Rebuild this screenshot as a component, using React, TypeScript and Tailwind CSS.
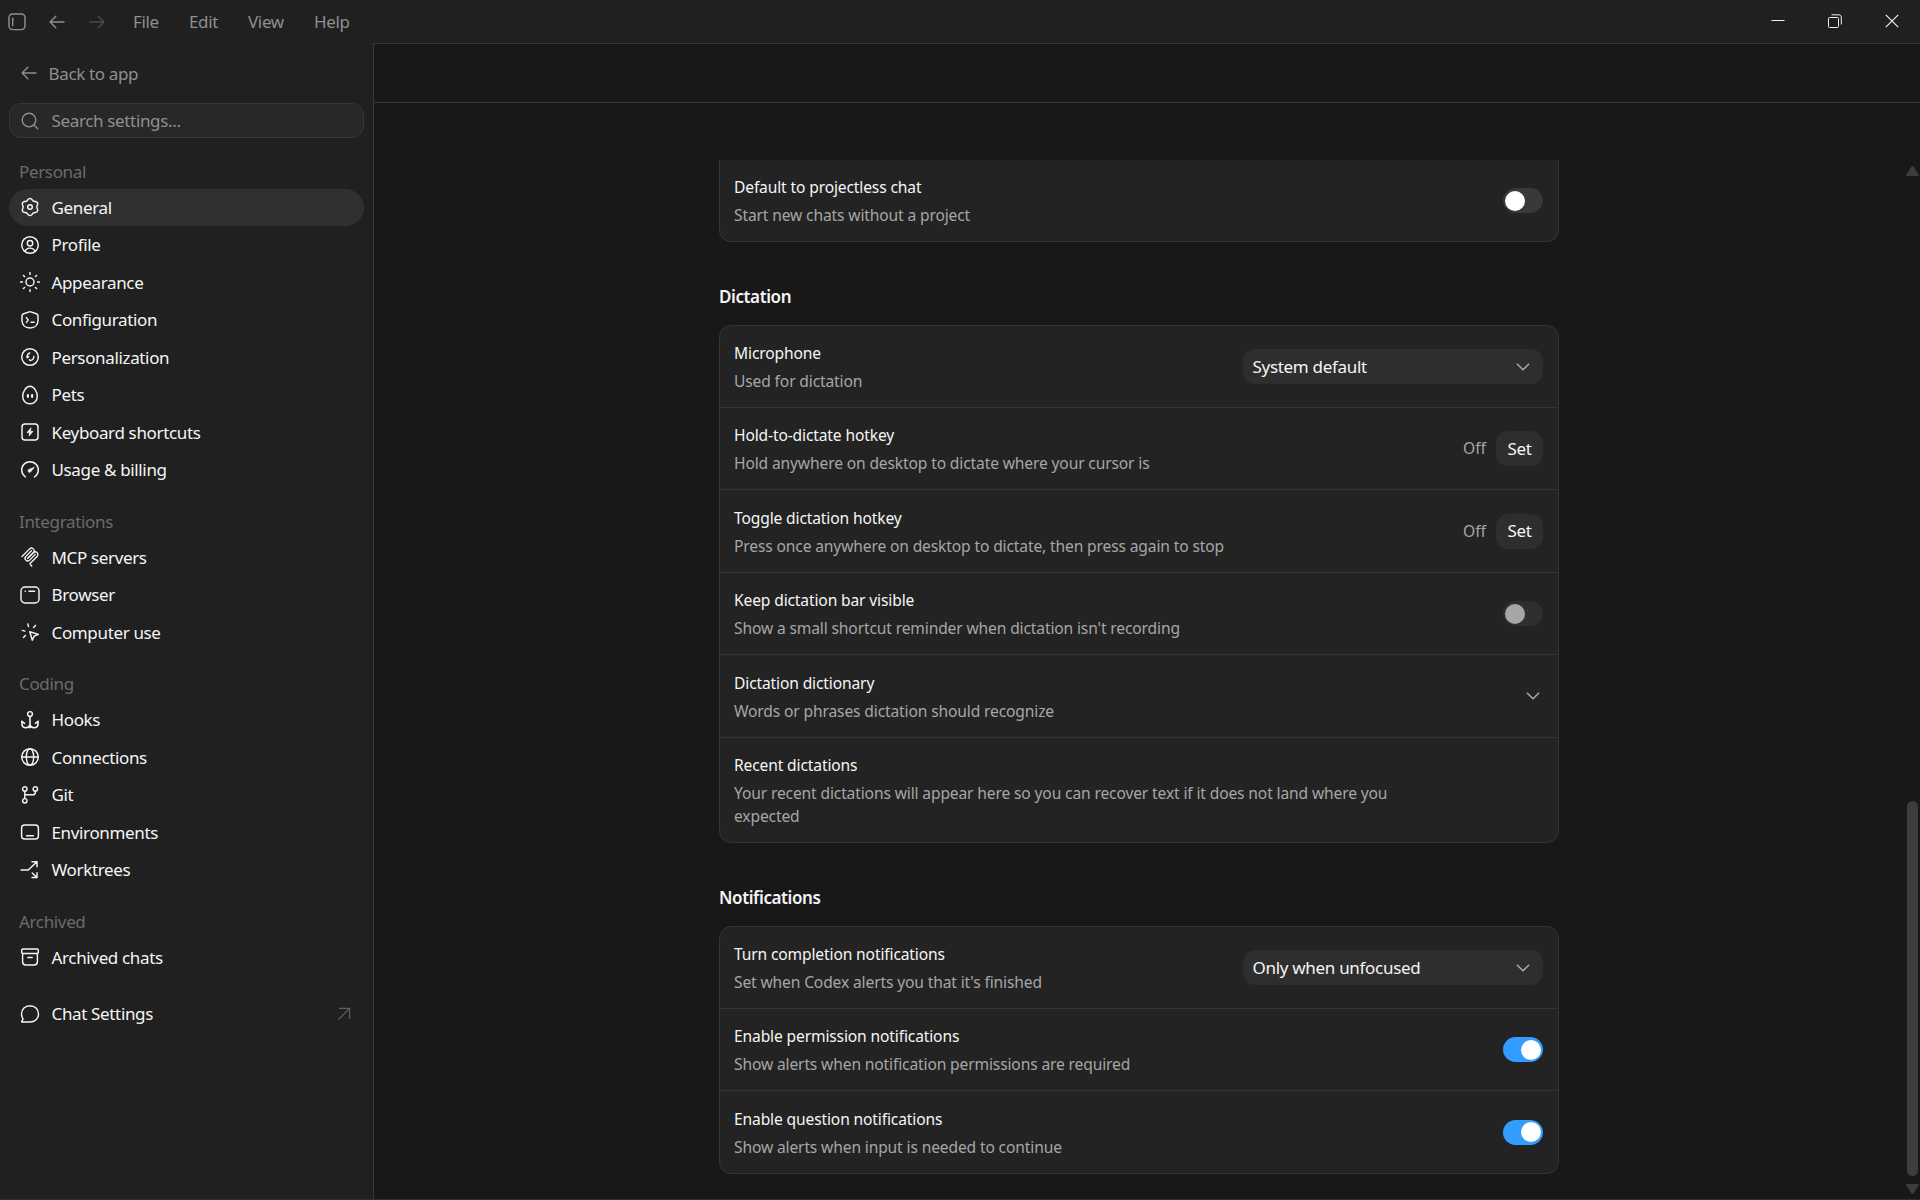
import type { ReactNode } from "react";

const Icon = ({
  children,
  className = "size-5",
}: {
  children: ReactNode;
  className?: string;
}) => (
  <svg
    viewBox="0 0 20 20"
    fill="none"
    stroke="currentColor"
    strokeWidth="1.45"
    strokeLinecap="round"
    strokeLinejoin="round"
    className={`${className} shrink-0`}
  >
    {children}
  </svg>
);

// six-lobed outline of the settings cog
const cogOutline = Array.from({ length: 72 }, (_, i) => {
  const a = (i * Math.PI) / 36;
  const r = 7.7 - 0.85 * Math.cos(6 * a);
  return `${(10 + r * Math.cos(a)).toFixed(2)},${(10 + r * Math.sin(a)).toFixed(2)}`;
}).join(" ");

const ArrowLeft = () => (
  <Icon>
    <path d="M17 10H3.2M8.8 4.3 3.1 10l5.7 5.7" strokeWidth="1.35" />
  </Icon>
);

const Chevron = () => (
  <Icon className="size-4">
    <path d="m3 6.5 7 7 7-7" strokeWidth="2" />
  </Icon>
);

const icons = {
  general: (
    <Icon>
      <polygon points={cogOutline} />
      <circle cx="10" cy="10" r="2.3" />
    </Icon>
  ),
  profile: (
    <Icon>
      <circle cx="10" cy="10" r="8.3" />
      <circle cx="10" cy="8.2" r="2.7" />
      <path d="M5 16.2c.8-2 2.7-3.1 5-3.1s4.2 1.1 5 3.1" />
    </Icon>
  ),
  appearance: (
    <Icon>
      <circle cx="10" cy="10" r="4" />
      <path d="M10 .6v1.8M10 17.6v1.8M.6 10h1.8M17.6 10h1.8M3.4 3.4l1.2 1.2M15.4 15.4l1.2 1.2M3.4 16.6l1.2-1.2M15.4 4.6l1.2-1.2" />
    </Icon>
  ),
  configuration: (
    <Icon>
      <path d="M9.2 1.9 3.7 3.8C2.6 4.2 2 4.9 2 6v4.600c0 4.600 3.400 7.400 8 7.400s8-2.800 8-7.400V6c0-1.100-.6-1.800-1.700-2.200l-5.500-1.900a2.500 2.500 0 0 0-1.600 0Z" />
      <path d="M6.4 7.6 8.2 10l-1.800 2.400M11 12.3h3.200" />
    </Icon>
  ),
  personalization: (
    <Icon>
      <circle cx="10" cy="10" r="8.3" />
      <path d="M9.7 5.900c-1.900 1.100-2.900 2.800-2.600 4.800M13.8 9.400c.1 2-1.100 3.700-3.400 4.200M7.1 10.700l1.600-.9M10.4 13.600l-1-.9" />
    </Icon>
  ),
  pets: (
    <Icon>
      <path d="M10 1.2c-4 0-7.300 5.600-7.300 10 0 4.500 3.100 7.500 7.300 7.500s7.300-3 7.300-7.500c0-4.400-3.300-10-7.300-10Z" />
      <path d="M7.9 10.2v1.600M12.1 10.2v1.600" strokeWidth="2.2" />
    </Icon>
  ),
  keyboard: (
    <Icon>
      <rect x="2" y="2" width="16" height="16" rx="3" />
      <path
        d="m10.8 6.2-3.7 4.400h2.500l-.5 3.300 3.800-4.500h-2.500l.4-3.200Z"
        fill="currentColor"
        strokeWidth=".8"
      />
    </Icon>
  ),
  usage: (
    <Icon>
      <path d="M5.5 17A8.300 8.300 0 1 1 14.500 17" />
      <path
        d="M13.9 7.600 9.400 9.300a1.500 1.500 0 1 0 1.500 2.200l3-3.900Z"
        fill="currentColor"
        strokeWidth=".8"
      />
    </Icon>
  ),
  mcp: (
    <svg
      viewBox="0 0 180 180"
      fill="none"
      stroke="currentColor"
      strokeWidth="12"
      strokeLinecap="round"
      className="size-5 shrink-0"
    >
      <path d="M18 84.853 85.882 16.970c9.373-9.372 24.569-9.372 33.941 0 9.373 9.373 9.373 24.569 0 33.942L68.558 102.177" />
      <path d="m69.265 101.470 50.558-50.558c9.373-9.373 24.569-9.373 33.942 0l.353.353c9.373 9.373 9.373 24.569 0 33.941L92.725 146.600c-3.124 3.124-3.124 8.189 0 11.313l12.606 12.607" />
      <path d="M102.853 33.941 52.648 84.146c-9.372 9.372-9.372 24.568 0 33.941 9.373 9.372 24.569 9.372 33.941 0l50.205-50.205" />
    </svg>
  ),
  browser: (
    <Icon>
      <rect x="1" y="2" width="18" height="16" rx="4" />
      <path d="M5.2 6.2h.2M9 6.2h5.600" />
    </Icon>
  ),
  computer: (
    <Icon>
      <path d="m9.8 9.700 8.600 2.700-4.200 1.700-1.900 4.200L9.800 9.700ZM2.300 8.400l2.600.7M7.800 1.900l.7 2.700M15.500 3.400l-1.900 2.100M5.400 13.400l-1.900 2" />
    </Icon>
  ),
  hooks: (
    <Icon>
      <circle cx="10" cy="4" r="2.4" />
      <path
        d="M10 6.400v11.300M1.900 11.300v2.200c0 2.700 1.600 4.300 4.100 4.300 2.200 0 3.500-1.100 4-3 .5 1.900 1.800 3 4 3 2.500 0 4.100-1.600 4.100-4.300v-2.200M1.900 11.300l2.600 2M18.100 11.300l-2.600 2"
        strokeWidth="1.6"
      />
    </Icon>
  ),
  connections: (
    <Icon>
      <circle cx="10" cy="10" r="8.3" />
      <ellipse cx="10" cy="10" rx="3.7" ry="8.3" />
      <path d="M1.7 10h16.6" />
    </Icon>
  ),
  git: (
    <Icon>
      <circle cx="4.8" cy="4" r="2.2" />
      <circle cx="15.3" cy="4" r="2.2" />
      <circle cx="4.8" cy="15.8" r="2.2" />
      <path d="M4.8 6.200v7.400M15.300 6.200v1.200c0 1.600-.8 2.400-2.400 2.400H4.800" />
    </Icon>
  ),
  environments: (
    <Icon>
      <rect x="1.6" y="3" width="16.8" height="14" rx="3" />
      <path d="M6.6 13.8h6.8" />
    </Icon>
  ),
  worktrees: (
    <Icon>
      <path d="M1 10h7.200l8.800-8.300M12 1.700h5v5M12.200 12.900l4.800 4.600M17 12.700v4.800h-5" />
    </Icon>
  ),
  archive: (
    <Icon>
      <rect x="1.7" y="2" width="16.6" height="4.5" rx="1.3" />
      <path d="M2.6 6.500v8.200c0 2.200 1.200 3.200 3.200 3.200h8.400c2 0 3.200-1 3.200-3.200V6.500M7.800 10.400h4.400" />
    </Icon>
  ),
  chat: (
    <Icon>
      <path d="M10 1.700c-4.800 0-8.500 3.600-8.500 8.200 0 1.700.4 3 1.200 4.200.4.600.4 1-.1 1.800l-.8 1.400c-.3.500 0 .8.500.8H10c4.800 0 8.500-3.500 8.500-8.200S14.800 1.700 10 1.700Z" />
    </Icon>
  ),
};

const sections: { title: string; items: [ReactNode, string][] }[] = [
  {
    title: "Personal",
    items: [
      [icons.general, "General"],
      [icons.profile, "Profile"],
      [icons.appearance, "Appearance"],
      [icons.configuration, "Configuration"],
      [icons.personalization, "Personalization"],
      [icons.pets, "Pets"],
      [icons.keyboard, "Keyboard shortcuts"],
      [icons.usage, "Usage & billing"],
    ],
  },
  {
    title: "Integrations",
    items: [
      [icons.mcp, "MCP servers"],
      [icons.browser, "Browser"],
      [icons.computer, "Computer use"],
    ],
  },
  {
    title: "Coding",
    items: [
      [icons.hooks, "Hooks"],
      [icons.connections, "Connections"],
      [icons.git, "Git"],
      [icons.environments, "Environments"],
      [icons.worktrees, "Worktrees"],
    ],
  },
  {
    title: "Archived",
    items: [[icons.archive, "Archived chats"]],
  },
];

const TitleBar = () => (
  <header className="flex h-[43px] shrink-0 items-center bg-[#202020] text-[#8f8f8f]">
    <div className="flex items-center pl-[7px]">
      <Icon>
        <rect x="2" y="2" width="16" height="15.6" rx="3.5" />
        <path d="M5.7 6.200v7.200" />
      </Icon>
      <div className="ml-5">
        <ArrowLeft />
      </div>
      <div className="ml-5 rotate-180 text-[#4b4b4b]">
        <ArrowLeft />
      </div>
    </div>
    <nav className="flex pt-px text-[17px] leading-6 tracking-[-0.35px]">
      <span className="ml-[26px] w-14">File</span>
      <span className="w-[59px]">Edit</span>
      <span className="w-[66px]">View</span>
      <span>Help</span>
    </nav>
    <div className="ml-auto flex pb-0.5 text-[#f0f0f0]">
      <svg viewBox="0 0 14 14" className="mr-[43px] size-3.5" fill="none" stroke="currentColor">
        <path d="M.5 6.500h13" />
      </svg>
      <svg viewBox="0 0 14 14" className="mr-[43px] size-3.5" fill="none" stroke="currentColor">
        <rect x=".5" y="3.5" width="10" height="10" rx="1" />
        <path d="M3.500.8h7.500a2.300 2.300 0 0 1 2.300 2.300v7.400" />
      </svg>
      <svg viewBox="0 0 14 14" className="mr-[21px] size-3.5" fill="none" stroke="currentColor" strokeWidth="1.2">
        <path d="m.8.8 12.400 12.400M13.200.8.8 13.200" />
      </svg>
    </div>
  </header>
);

const NavItem = ({
  icon,
  label,
  active,
}: {
  icon: ReactNode;
  label: string;
  active?: boolean;
}) => (
  <li
    className={`mb-[1.25px] flex h-[36.25px] items-center gap-[11.5px] rounded-full pl-[11px] text-[#f5f5f5] ${
      active ? "bg-[#303030]" : ""
    }`}
  >
    {icon}
    <span className="pt-px">{label}</span>
  </li>
);

const Sidebar = () => (
  <aside className="w-[373px] shrink-0 px-[9px] text-[17px] leading-6 tracking-[-0.35px]">
    <div className="mt-[18px] flex h-6 items-center gap-2 pl-2.5 text-[#8f8f8f]">
      <ArrowLeft />
      <span className="pl-[1.5px] pt-px">Back to app</span>
    </div>
    <div className="mt-[18px] flex h-[35px] items-center gap-[11.5px] rounded-xl border border-[#363636] bg-[#282828] pl-2.5 text-[#8f8f8f]">
      <Icon>
        <circle cx="9" cy="9" r="6.8" strokeWidth="1.35" />
        <path d="m14 14 3.700 3.700" strokeWidth="1.35" />
      </Icon>
      <span>Search settings...</span>
    </div>
    <div className="mt-[16.25px]">
      {sections.map((section) => (
        <section key={section.title} className="mb-[16.25px]">
          <h2 className="flex h-[35px] items-center pl-2.5 text-[#6b6b6b]">
            {section.title}
          </h2>
          <ul>
            {section.items.map(([icon, label]) => (
              <NavItem
                key={label}
                icon={icon}
                label={label}
                active={label === "General"}
              />
            ))}
          </ul>
        </section>
      ))}
    </div>
    <div className="mt-5 flex h-[36.25px] items-center gap-[11.5px] pl-[11px] text-[#f5f5f5]">
      {icons.chat}
      <span className="pt-px">Chat Settings</span>
      <svg
        viewBox="0 0 14 14"
        fill="none"
        stroke="#5f5f5f"
        strokeWidth="1.2"
        className="ml-auto mr-[13px] size-3.5"
      >
        <path d="M1.500 12.500 12.500 1.500M2 1.300h10.700V12" />
      </svg>
    </div>
  </aside>
);

const Toggle = ({ on, disabled }: { on?: boolean; disabled?: boolean }) => (
  <div
    className={`flex h-[25px] w-10 items-center rounded-full px-0.5 ${
      on ? "justify-end bg-[#339cff]" : disabled ? "bg-[#2f2f2f]" : "bg-[#393939]"
    }`}
  >
    <div className={`size-5 rounded-full ${disabled ? "bg-[#a6a6a6]" : "bg-white"}`} />
  </div>
);

const Select = ({ value }: { value: string }) => (
  <div className="flex h-[35px] w-[300px] shrink-0 items-center justify-between rounded-xl bg-[#2e2e2e] pl-[9.5px] pr-3 text-[17px] tracking-[-0.3px] text-[#f5f5f5]">
    <span>{value}</span>
    <span className="text-[#a6a6a6]">
      <Chevron />
    </span>
  </div>
);

const HotkeyButton = () => (
  <div className="flex items-center gap-2.5">
    <span className="pt-px text-[15.6px] text-[#a6a6a6]">Off</span>
    <span className="flex h-[35px] w-[47px] items-center justify-center rounded-xl bg-[#2e2e2e] text-[17px] tracking-[-0.3px] text-[#f5f5f5]">
      Set
    </span>
  </div>
);

const Row = ({
  title,
  description,
  className = "h-[82.5px]",
  children,
}: {
  title: string;
  description: string;
  className?: string;
  children?: ReactNode;
}) => (
  <div
    className={`flex items-center justify-between border-b border-[#343434] pl-[14px] pr-[15px] last:border-b-0 ${className}`}
  >
    <div className="max-w-[680px] pt-[2.5px] text-[15.6px] leading-[23px] tracking-[-0.14px]">
      <h3 className="text-[#f5f5f5]">{title}</h3>
      <p className="mt-[5px] text-[#a6a6a6]">{description}</p>
    </div>
    {children}
  </div>
);

export default function App() {
  return (
    <div className="flex h-[1200px] w-[1920px] flex-col overflow-hidden border-b border-[#2e2e2e] bg-[#202020] font-['Noto_Sans',sans-serif]">
      <TitleBar />
      <div className="flex min-h-0 flex-1">
        <Sidebar />
        <main className="flex min-w-0 flex-1 flex-col border-l border-t border-[#383838] bg-[#181818]">
          <div className="h-[59px] shrink-0 border-b border-[#383838]" />
          <div className="flex flex-1">
            <div className="ml-[345px] w-[840px] pt-[57px]">
              <div className="rounded-b-xl border border-t-0 border-[#343434] bg-[#232323]">
                <Row
                  title="Default to projectless chat"
                  description="Start new chats without a project"
                  className="h-[81px]"
                >
                  <Toggle />
                </Row>
              </div>

              <h2 className="mt-[43px] h-[40.25px] text-[17px] font-semibold leading-6 tracking-[-0.4px] text-[#f5f5f5]">
                Dictation
              </h2>
              <div className="rounded-xl border border-[#343434] bg-[#232323]">
                <Row
                  title="Microphone"
                  description="Used for dictation"
                  className="h-[81.5px]"
                >
                  <Select value="System default" />
                </Row>
                <Row
                  title="Hold-to-dictate hotkey"
                  description="Hold anywhere on desktop to dictate where your cursor is"
                >
                  <HotkeyButton />
                </Row>
                <Row
                  title="Toggle dictation hotkey"
                  description="Press once anywhere on desktop to dictate, then press again to stop"
                >
                  <HotkeyButton />
                </Row>
                <Row
                  title="Keep dictation bar visible"
                  description="Show a small shortcut reminder when dictation isn't recording"
                >
                  <Toggle disabled />
                </Row>
                <Row
                  title="Dictation dictionary"
                  description="Words or phrases dictation should recognize"
                >
                  <span className="mr-0.5 text-[#a6a6a6]">
                    <Chevron />
                  </span>
                </Row>
                <Row
                  title="Recent dictations"
                  description="Your recent dictations will appear here so you can recover text if it does not land where you expected"
                  className="h-[104.25px]"
                />
              </div>

              <h2 className="mt-[43px] h-[40.25px] text-[17px] font-semibold leading-6 tracking-[-0.4px] text-[#f5f5f5]">
                Notifications
              </h2>
              <div className="rounded-xl border border-[#343434] bg-[#232323]">
                <Row
                  title="Turn completion notifications"
                  description="Set when Codex alerts you that it's finished"
                  className="h-[81.5px]"
                >
                  <Select value="Only when unfocused" />
                </Row>
                <Row
                  title="Enable permission notifications"
                  description="Show alerts when notification permissions are required"
                >
                  <Toggle on />
                </Row>
                <Row
                  title="Enable question notifications"
                  description="Show alerts when input is needed to continue"
                  className="h-[82px]"
                >
                  <Toggle on />
                </Row>
              </div>
            </div>

            <div className="ml-auto mr-px flex w-[13px] flex-col items-center text-[#3d3d3d]">
              <svg viewBox="0 0 13 10" className="mt-[63px] h-2.5 w-[13px]" fill="currentColor">
                <path d="M5.300.8a1.500 1.500 0 0 1 2.400 0l4.800 7.400c.6.900.1 1.800-.9 1.800H1.400C.4 10-.1 9.100.5 8.200Z" />
              </svg>
              <div className="mt-[625px] h-[375px] w-[11px] rounded-full bg-[#3d3d3d]" />
              <svg viewBox="0 0 13 10" className="mt-2 h-2.5 w-[13px] rotate-180" fill="currentColor">
                <path d="M5.300.8a1.500 1.500 0 0 1 2.400 0l4.800 7.400c.6.900.1 1.800-.9 1.800H1.400C.4 10-.1 9.100.5 8.200Z" />
              </svg>
            </div>
          </div>
        </main>
      </div>
    </div>
  );
}
